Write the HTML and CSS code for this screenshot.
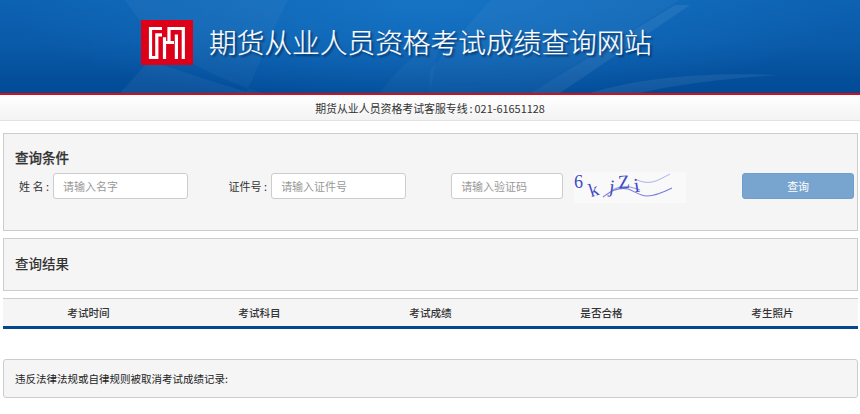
FILE: index.html
```html
<!DOCTYPE html>
<html lang="zh-CN">
<head>
<meta charset="utf-8">
<title>期货从业人员资格考试成绩查询网站</title>
<link rel="stylesheet" href="styles.css">
</head>
<body>
<header class="banner">
  <svg class="banner-art" viewBox="0 0 860 93" preserveAspectRatio="none" aria-hidden="true">
    <path d="M125 0 C150 40 190 70 262 93 L246 93 C262 60 272 30 288 0 Z" fill="#ffffff" opacity="0.035"/>
    <path d="M150 60 C190 75 225 85 250 93 L120 93 Z" fill="#ffffff" opacity="0.05"/>
    <path d="M530 93 L680 0 L490 0 L430 70 L430 93 Z" fill="#ffffff" opacity="0.035"/>
    <path d="M530 93 L675 5 L690 5 L560 93 Z" fill="#ffffff" opacity="0.07"/>
    <path d="M590 93 C640 78 700 72 780 75 C730 78 680 84 640 93 Z" fill="#ffffff" opacity="0.07"/>
    <path d="M380 93 C395 70 420 50 440 40 L430 93 Z" fill="#ffffff" opacity="0.03"/>
  </svg>
  <div class="banner-inner">
    <svg class="logo" viewBox="0 0 52 45" role="img" aria-label="CFA">
      <rect width="52" height="45" fill="#dc0019"/>
      <path d="M21 8.5H9.5V37.5H15.8V14.8H21" fill="none" stroke="#fff" stroke-width="3.2"/>
      <path d="M23.5 17.3V39M23.5 22.5H33M28 22V8.5H42.3V39M35.4 14.5V39" fill="none" stroke="#fff" stroke-width="3.2"/>
    </svg>
    <h1 class="site-title">期货从业人员资格考试成绩查询网站</h1>
  </div>
</header>
<div class="hotline">期货从业人员资格考试客服专线 : 021-61651128</div>

<main class="content">
  <section class="panel panel-query">
    <h2 class="panel-title panel-title-strong">查询条件</h2>
    <form class="query-row">
      <label class="field field-name">
        <span class="field-label">姓 名 :</span>
        <input class="text-input input-name" type="text" placeholder="请输入名字">
      </label>
      <label class="field field-id">
        <span class="field-label">证件号 :</span>
        <input class="text-input input-name" type="text" placeholder="请输入证件号">
      </label>
      <input class="text-input input-code" type="text" placeholder="请输入验证码">
      <svg class="captcha" viewBox="0 0 112 31" role="img" aria-label="验证码">
        <rect width="112" height="31" fill="#f9f9fa"/>
        <path d="M29 25 C33 22 37 19 41 18 C46 16 50 16 54 17 C60 19 66 24 73 24 C82 24 90 20 98 16" fill="none" stroke="#5a60d0" stroke-width="1.1" opacity=".8"/>
        <path d="M38 18 C44 15 50 14 56 15 C60 16 63 17 66 18" fill="none" stroke="#5a60d0" stroke-width="1.2" opacity=".6"/>
        <path d="M63 8 C68 10 73 11 78 10 C84 9 90 5 96 2" fill="none" stroke="#7074d8" stroke-width="1" opacity=".55"/>
        <g class="captcha-text">
          <text x="0" y="16" font-size="18">6</text>
          <text x="15" y="24" font-size="19" transform="rotate(-18 20 18)">k</text>
          <text x="35" y="21" font-size="19" transform="rotate(8 38 18)">j</text>
          <text x="44" y="16" font-size="19" transform="rotate(-4 50 10)">Z</text>
          <text x="60" y="20" font-size="20" transform="rotate(-8 63 14)">i</text>
        </g>
      </svg>
      <button class="query-btn" type="button">查询</button>
    </form>
  </section>

  <section class="panel panel-result">
    <h2 class="panel-title">查询结果</h2>
  </section>

  <div class="result-head">
    <div class="result-col">考试时间</div>
    <div class="result-col">考试科目</div>
    <div class="result-col">考试成绩</div>
    <div class="result-col">是否合格</div>
    <div class="result-col">考生照片</div>
  </div>

  <section class="panel panel-note">违反法律法规或自律规则被取消考试成绩记录:</section>
</main>
</body>
</html>
```

FILE: styles.css
```css
* { box-sizing: border-box; }
html, body { margin: 0; padding: 0; }
body {
  width: 860px;
  height: 414px;
  overflow: hidden;
  background: #fff;
  color: #333;
  font-family: "Noto Sans CJK SC", "Liberation Sans", sans-serif;
  font-size: 11px;
}
.banner {
  position: relative;
  height: 95px;
  border-bottom: 2px solid #d40d17;
  background:
    radial-gradient(ellipse 420px 110px at 430px 0, #1673c4 0%, rgba(22,115,196,0) 100%),
    linear-gradient(#0d62b2 0%, #0a5ba9 45%, #014a96 100%);
}
.banner-art { position: absolute; left: 0; top: 0; width: 860px; height: 93px; }
.banner-inner {
  position: relative;
  display: flex;
  align-items: flex-start;
  padding: 20px 0 0 141px;
}
.logo { width: 52px; height: 45px; flex: none; display: block; }
.site-title {
  margin: 0 0 0 16px;
  color: #fff;
  font-size: 27.7px;
  font-weight: 300;
  line-height: 43px;
  white-space: nowrap;
  -webkit-text-stroke: .2px #fff;
  text-shadow: 2px 2px 2px rgba(0, 30, 70, .7);
}
.hotline {
  height: 26px;
  line-height: 26px;
  text-align: center;
  font-size: 10.9px;
  word-spacing: -.5px;
  border-bottom: 1px solid #e2e2e2;
  background: linear-gradient(#fff, #f3f3f3);
  color: #333;
}
.content { padding: 12px 2px 0 3px; }
.panel {
  background: #f5f5f5;
  border: 1px solid #ccc;
}
.panel-title {
  margin: 0;
  font-size: 13.5px;
  font-weight: 500;
  line-height: 20px;
  color: #333;
}
.panel-title-strong { -webkit-text-stroke: .25px #333; }
.panel-query { height: 98px; padding: 13px 0 0 11px; }
.query-row { display: flex; align-items: flex-start; margin-top: 6px; }
.field { display: flex; align-items: center; }
.field-label { font-size: 11px; white-space: pre; margin-right: 4px; }
.field-name { margin-left: 4px; }
.field-id { margin-left: 40.6px; }
.text-input {
  height: 26px;
  padding: 0 9px;
  border: 1px solid #ccc;
  border-radius: 3px;
  background: #fff;
  font: 11px "Noto Sans CJK SC", sans-serif;
  color: #333;
  outline: none;
}
.text-input::placeholder { color: #999; opacity: 1; }
.input-name { width: 135px; }
.input-code { width: 112px; margin-left: 45px; }
.captcha { width: 112px; height: 31px; margin: -1px 0 0 11px; flex: none; display: block; }
.captcha-text { fill: #4149c4; font-family: "Liberation Serif", serif; }
.query-btn {
  width: 112px;
  height: 26px;
  margin-left: 56px;
  border: 1px solid #6f9fcb;
  border-radius: 3px;
  background: #78a5cf;
  color: #fff;
  font: 11px "Noto Sans CJK SC", sans-serif;
  padding: 0;
}
.panel-result { height: 53px; margin-top: 7px; padding: 14px 0 0 11px; }
.result-head {
  display: flex;
  height: 31px;
  margin-top: 7px;
  background: #f5f5f5;
  border-top: 1px solid #ccc;
  border-bottom: 3px solid #03478f;
}
.result-col {
  flex: 1 1 0;
  text-align: center;
  line-height: 27px;
  font-size: 10.6px;
  font-weight: 500;
  color: #333;
}
.panel-note {
  height: 39px;
  margin-top: 30px;
  padding-left: 11px;
  line-height: 37px;
  border-radius: 3px;
  color: #222;
  font-size: 10.5px;
}
```
